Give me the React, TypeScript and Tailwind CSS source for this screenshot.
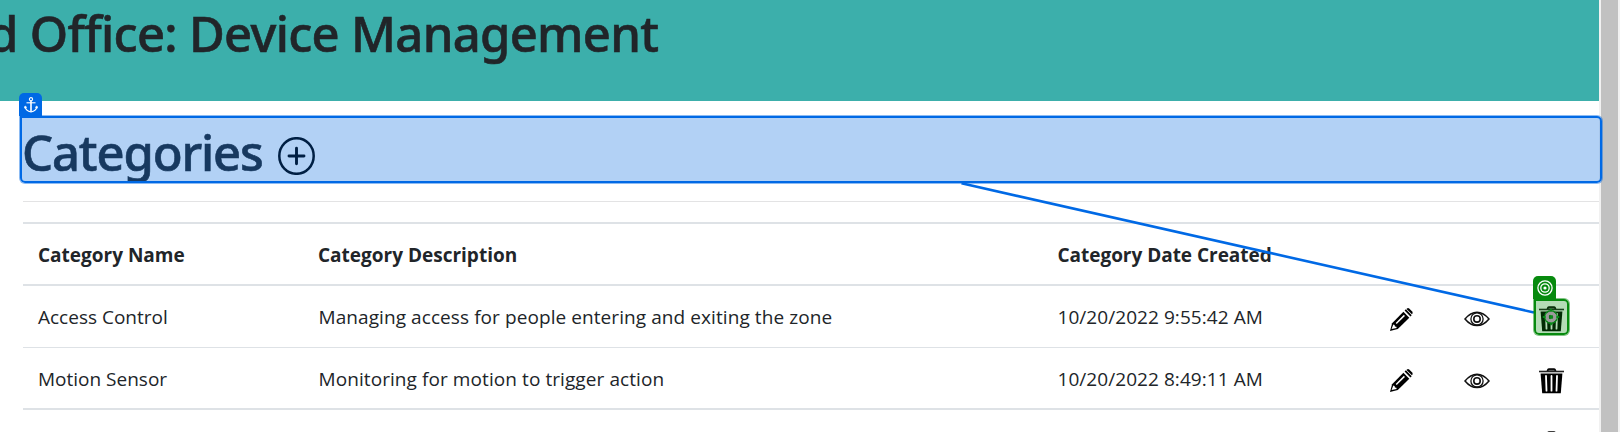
type Category = { name: string; description: string; created: string };

const categories: Category[] = [
  {
    name: "Access Control",
    description: "Managing access for people entering and exiting the zone",
    created: "10/20/2022 9:55:42 AM",
  },
  {
    name: "Motion Sensor",
    description: "Monitoring for motion to trigger action",
    created: "10/20/2022 8:49:11 AM",
  },
];

const columns = "grid grid-cols-[280px_740px_330px_74px_75px_77px] items-center";

function PlusCircle() {
  return (
    <svg className="h-[38px] w-[37px]" viewBox="0 0 37 38" fill="none" stroke="#000" strokeWidth="2.5">
      <ellipse cx="18.5" cy="19" rx="17.2" ry="17.8" />
      <path d="M18.5 11.2v15.6M11 19h15" strokeWidth="2.9" strokeLinecap="round" />
    </svg>
  );
}

function PencilIcon() {
  return (
    <svg className="h-[25px] w-[25px]" viewBox="0 0 25 25">
      <path d="M1 23.9 3.1 16.3 14.4 4.8 20.3 10.8 8.8 22Z" fill="#000" />
      <path d="M15.6 3.6 16.9 2.3 22.7 8.2 21.4 9.6Z" fill="#000" />
      <path d="M18 1.5Q19 .7 20.2 1.6L23.2 4.6Q24 5.7 23.4 6.8L22.9 7.2 17.5 1.9Z" fill="#000" />
      <path d="M2.6 22.1 4.3 17.6 5.6 18 5.9 19.6 7.4 19.8 7.6 21Z" fill="#fff" />
      <path d="M7.2 16.5 15.4 8.4" stroke="#fff" strokeWidth="1.5" />
    </svg>
  );
}

function EyeIcon() {
  return (
    <svg className="h-[16px] w-[26px]" viewBox="0 0 26 16" fill="none" stroke="#111">
      <path d="M1 8Q6.5 1.2 13 1.2T25 8Q19.5 14.6 13 14.6T1 8Z" strokeWidth="1.5" />
      <circle cx="13" cy="7.9" r="6.1" strokeWidth="1.3" />
      <circle cx="13" cy="7.9" r="3.2" strokeWidth="1.6" />
    </svg>
  );
}

function TrashIcon() {
  return (
    <svg className="h-[26px] w-[25px]" viewBox="0 0 25 26">
      <path d="M7.6 3 8.4 1Q8.8.2 10 .2H15Q16.2.2 16.6 1L17.4 3Z" fill="#000" />
      <path d="M9.6 2.4H15.4" stroke="#777" strokeWidth="1" />
      <rect x="0" y="2.7" width="25" height="1.6" fill="#222" />
      <path d="M1.6 5.5H23.4L21.8 25.3H3.2Z" fill="#000" />
      <path d="M7 8 7.5 22.7M12.5 8V22.7M18 8 17.5 22.7" stroke="#fff" strokeWidth="1.8" strokeLinecap="round" />
    </svg>
  );
}

function AnchorIcon() {
  return (
    <svg className="h-4 w-[14px]" viewBox="0 0 14 16" fill="none" stroke="#fff" strokeWidth="1.1">
      <circle cx="7" cy="2.2" r="1.6" />
      <path d="M2.5 5.8H11.5" />
      <path d="M7 3.8V14.6" strokeWidth="1.6" />
      <path d="M1.2 9.5C1.6 13 4 14.5 7 14.8 10 14.5 12.4 13 12.8 9.5" strokeWidth="1.3" />
      <path d="M.3 11.4 1.2 9 3 10.7M13.7 11.4 12.8 9 11 10.7" strokeWidth=".9" />
    </svg>
  );
}

function TargetIcon() {
  return (
    <svg className="h-4 w-4" viewBox="0 0 16 16" fill="none" stroke="#fff" strokeWidth="1.3">
      <circle cx="8" cy="8" r="7.1" />
      <circle cx="8" cy="8" r="4.2" />
      <circle cx="8" cy="8" r="1.6" fill="#fff" stroke="none" />
    </svg>
  );
}

function Pointer() {
  return (
    <svg className="absolute left-[6px] top-[7px] h-[18px] w-[18px]" viewBox="0 0 18 18" fill="none">
      <circle cx="9" cy="9" r="4" stroke="#9a9a9a" strokeWidth="3.6" />
      <circle cx="9" cy="9" r="6.3" stroke="#078a18" strokeWidth="1.2" />
      <circle cx="9" cy="9" r="2" fill="#078a18" />
      <path d="M9 .8V3.6M9 14.4V17.2M.8 9H3.6M14.4 9H17.2" stroke="#078a18" strokeWidth="1.8" />
    </svg>
  );
}

function Actions() {
  return (
    <>
      <div className="pl-[16px] pt-[5px]"><PencilIcon /></div>
      <div className="pl-[16.5px] pt-[5px]"><EyeIcon /></div>
      <div className="pl-[17px] pt-[5px]"><TrashIcon /></div>
    </>
  );
}

export default function App() {
  return (
    <div className="relative flex h-[432px] w-[1620px] overflow-hidden bg-white font-['Open_Sans',sans-serif] text-[19px] tracking-[0.06px] text-[#212529]">
      <main className="w-[1599px] shrink-0">
        <header className="flex h-[101px] items-start overflow-hidden bg-[#3cafab] font-['Noto_Sans',sans-serif] text-[49px] font-medium leading-[66px] tracking-[-0.7px] [-webkit-text-stroke:0.6px_#212529]">
          <h1 className="-ml-[12px] whitespace-nowrap">d Office: Device Management</h1>
        </header>
        <section className="pl-[23px]">
          <div className="flex h-[81px] items-start gap-[14px] overflow-hidden pt-[17px]">
            <h2 className="-ml-[1px] w-[242px] whitespace-nowrap font-['Noto_Sans',sans-serif] text-[49px] font-medium leading-[68px] tracking-[-1.15px] [-webkit-text-stroke:0.6px_#212529]">
              Categories
            </h2>
            <div className="pt-[19px]"><PlusCircle /></div>
          </div>
          <hr className="mt-[19px] border-0 border-t border-[#e3e3e4]" />
          <div className="mt-5 border-t-2 border-[#dee2e6]">
            <div className={`${columns} h-[62px] border-b-2 border-[#dee2e6] font-bold tracking-[0px]`}>
              <div className="pl-[15px] pt-[2px]">Category Name</div>
              <div className="pl-[15px] pt-[2px]">Category Description</div>
              <div className="pl-[14.5px] pt-[2px] tracking-[-0.03px]">Category Date Created</div>
            </div>
            {categories.map((c, i) => (
              <div
                key={c.name}
                className={`${columns} h-[62px] border-[#dee2e6] ${i === 0 ? "border-b" : "border-b-2"}`}
              >
                <div className="pl-[15px] pt-[2px] tracking-[0px]">{c.name}</div>
                <div className="pl-[15.5px] pt-[2px] tracking-[0.08px]">{c.description}</div>
                <div className="pl-[14.5px] pt-[2px]">{c.created}</div>
                <Actions />
              </div>
            ))}
            <div className={`${columns} h-[62px]`}>
              <div />
              <div />
              <div />
              <Actions />
            </div>
          </div>
        </section>
      </main>
      <aside className="flex w-[21px] shrink-0 bg-[#f1f1f1] pl-[2px] pr-[2px]">
        <div className="w-full bg-[#c1c1c1]" />
      </aside>

      <svg className="absolute left-0 top-0 h-[432px] w-[1620px]" viewBox="0 0 1620 432">
        <path d="M961.5 183.3 1534 312.5" stroke="#0069e5" strokeWidth="2.6" />
      </svg>

      <div className="absolute left-[20px] top-[116px] h-[67px] w-[1582px] rounded-[5px] rounded-tl-none border-2 border-[#0069e5] bg-[#0069e0]/30 shadow-[0_0_0_1px_rgba(0,105,229,0.45)]" />
      <div className="absolute left-[19px] top-[93px] flex h-[23px] w-[23px] items-center justify-center rounded-t-[5px] bg-[#0069e5]">
        <AnchorIcon />
      </div>

      <div className="absolute left-[1534px] top-[299px] h-[36px] w-[35px] rounded-[5px] rounded-tl-none border-2 border-[#078a0e] bg-[#078a0e]/30 shadow-[0_0_0_1px_rgba(7,138,14,0.5)]">
        <Pointer />
      </div>
      <div className="absolute left-[1533px] top-[276px] flex h-[23px] w-[23px] items-center justify-center rounded-t-[5px] bg-[#078a0e]">
        <TargetIcon />
      </div>
    </div>
  );
}
